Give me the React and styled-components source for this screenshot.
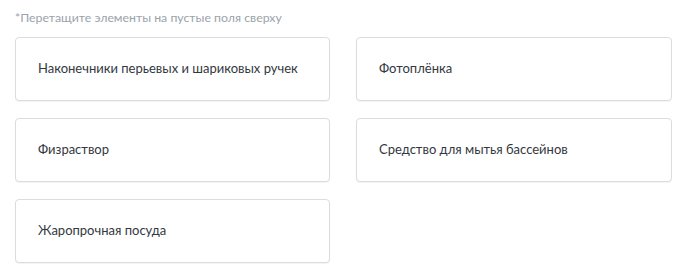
import React from 'react';
import styled, { createGlobalStyle } from 'styled-components';

const GlobalStyle = createGlobalStyle`
  html, body {
    margin: 0;
    padding: 0;
    background: #ffffff;
  }

  body {
    font-family: Lato, 'Noto Sans', sans-serif;
  }
`;

const Wrapper = styled.div`
  width: 700px;
  height: 280px;
  padding: 9px 28px 0 15px;
  box-sizing: border-box;
`;

const Hint = styled.p`
  margin: 0 0 11px;
  font-size: 12.3px;
  line-height: 17px;
  color: #9aa3ab;
`;

const Grid = styled.div`
  display: grid;
  grid-template-columns: 315px 316px;
  column-gap: 26px;
  row-gap: 17px;
`;

const Card = styled.div`
  display: flex;
  align-items: center;
  height: 64px;
  padding: 0 22px 2px;
  box-sizing: border-box;
  border: 1px solid #dcdcdc;
  border-radius: 4px;
  background: #fff;
  box-shadow: 0 1px 1px rgba(0, 0, 0, 0.05);
  font-size: 13px;
  color: #333840;
  white-space: nowrap;
  cursor: grab;
`;

const items = [
  'Наконечники перьевых и шариковых ручек',
  'Фотоплёнка',
  'Физраствор',
  'Средство для мытья бассейнов',
  'Жаропрочная посуда',
];

const App = () => {
  return (
    <Wrapper>
      <GlobalStyle />
      <Hint>*Перетащите элементы на пустые поля сверху</Hint>
      <Grid>
        {items.map((item) => (
          <Card key={item}>{item}</Card>
        ))}
      </Grid>
    </Wrapper>
  );
};

export default App;
